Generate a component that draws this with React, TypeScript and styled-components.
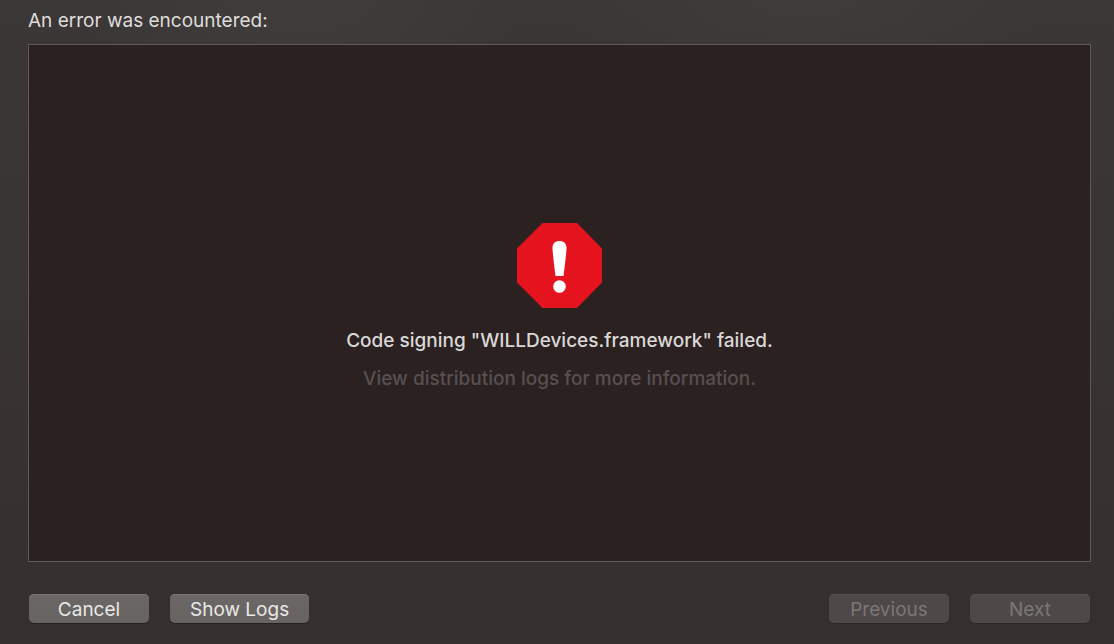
import React from "react";
import styled, { createGlobalStyle } from "styled-components";

const GlobalStyle = createGlobalStyle`
  * { box-sizing: border-box; }
  body { margin: 0; background: #363130; }
`;

const Sheet = styled.main`
  display: flex;
  flex-direction: column;
  min-height: 100vh;
  padding: 9px 23px 21px 28px;
  font-family: Inter, "Liberation Sans", sans-serif;
  font-size: 19px;
  line-height: 24px;
  color: #dfdddc;
  background:
    radial-gradient(ellipse 220px 110px at 27% 0, rgba(70, 70, 67, 0.4), transparent),
    radial-gradient(ellipse 240px 80px at 72% 0, rgba(68, 65, 63, 0.5), transparent),
    linear-gradient(#3b3736, #383433 50%, #352f2e);
`;

const Heading = styled.h1`
  margin: 0 0 11px;
  font-size: inherit;
  font-weight: 400;
`;

const Panel = styled.section`
  flex: 1;
  display: flex;
  flex-direction: column;
  align-items: center;
  justify-content: center;
  padding-top: 7px;
  text-align: center;
  background: #2a2120;
  border: 1px solid #625a58;
`;

const StopIcon = styled.svg`
  width: 86px;
  height: 86px;
  margin-bottom: 20px;
`;

const Message = styled.p<{ $dim?: boolean }>`
  margin: 0 0 ${(p) => (p.$dim ? 0 : 14)}px;
  font-weight: 500;
  color: ${(p) => (p.$dim ? "#585050" : "#dad8d7")};
`;

const Footer = styled.footer`
  display: flex;
  justify-content: space-between;
  padding: 32px 1px 0;
`;

const ButtonGroup = styled.div`
  display: flex;
  gap: 21px;
`;

const PushButton = styled.button`
  min-width: 120px;
  height: 29px;
  padding: 2px 20px 0;
  border: 0;
  border-radius: 5px;
  font: inherit;
  color: #e9e8e7;
  background: linear-gradient(#6b6766, #676361);
  box-shadow: inset 0 1px #777372, 0 1px 1px rgba(0, 0, 0, 0.3);

  &:disabled {
    color: #7b7776;
    background: #4e4948;
    box-shadow: inset 0 1px #555150, 0 1px 1px rgba(0, 0, 0, 0.15);
  }
`;

export default function App() {
  return (
    <>
      <GlobalStyle />
      <Sheet>
        <Heading>An error was encountered:</Heading>
        <Panel role="alert">
          <StopIcon viewBox="0 0 86 86" aria-hidden="true">
            <path d="M25.500 0H60L85 25.500V59.500L60 85H25.500L0 59.500V25.500Z" fill="#e5131d" />
            <path d="M42.500 18c-4.500 0-7.300 3-7 7.500.5 9 1.800 18 3 27.500h8c1.200-9.500 2.500-18.500 3-27.500.3-4.500-2.500-7.500-7-7.500Z" fill="#fff" />
            <circle cx="42.500" cy="63.500" r="6.300" fill="#fff" />
          </StopIcon>
          <Message>Code signing "WILLDevices.framework" failed.</Message>
          <Message $dim>View distribution logs for more information.</Message>
        </Panel>
        <Footer>
          <ButtonGroup>
            <PushButton type="button">Cancel</PushButton>
            <PushButton type="button">Show Logs</PushButton>
          </ButtonGroup>
          <ButtonGroup>
            <PushButton type="button" disabled>Previous</PushButton>
            <PushButton type="button" disabled>Next</PushButton>
          </ButtonGroup>
        </Footer>
      </Sheet>
    </>
  );
}
